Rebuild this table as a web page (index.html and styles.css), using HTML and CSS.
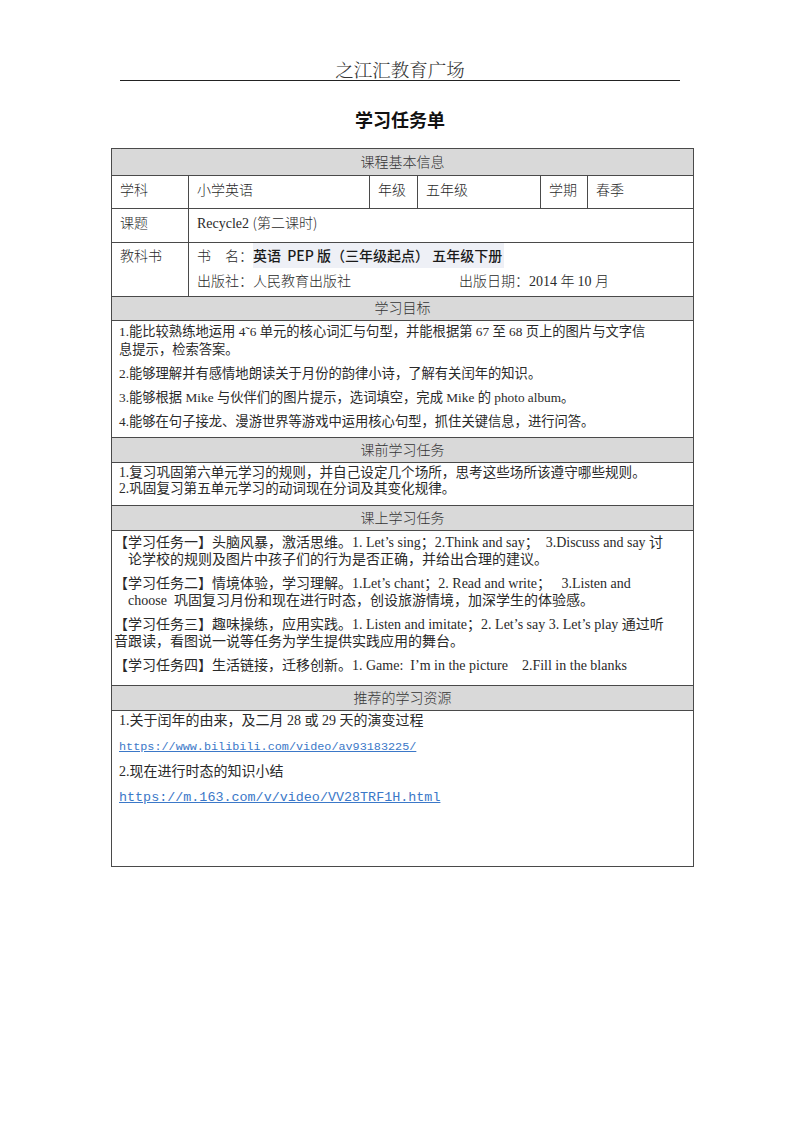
FILE: index.html
```html
<!DOCTYPE html>
<html lang="zh-CN">
<head>
<meta charset="utf-8">
<title>学习任务单</title>
<link rel="stylesheet" href="styles.css">
</head>
<body>
<div class="page">
  <div class="site-head">之江汇教育广场</div>
  <h1 class="title">学习任务单</h1>
  <table class="sheet">
    <colgroup>
      <col class="c1"><col class="c2"><col class="c3"><col class="c4"><col class="c5"><col class="c6">
    </colgroup>
    <tr class="head h26"><td colspan="6">课程基本信息</td></tr>
    <tr class="info r33">
      <td>学科</td><td>小学英语</td><td>年级</td><td>五年级</td><td>学期</td><td>春季</td>
    </tr>
    <tr class="info r34">
      <td>课题</td><td colspan="5"><span class="lat">Recycle2 </span>(第二课时)</td>
    </tr>
    <tr class="info book">
      <td>教科书</td>
      <td colspan="5">
        <div class="bline">书　名：<span class="hl">英语&nbsp; PEP 版（三年级起点） 五年级下册</span></div>
        <div class="bline pub"><span class="pubname">出版社：人民教育出版社</span><span>出版日期：<span class="lat">2014 </span>年 <span class="lat">10 </span>月</span></div>
      </td>
    </tr>
    <tr class="head"><td colspan="6">学习目标</td></tr>
    <tr class="body goals">
      <td colspan="6">
        <p>1.能比较熟练地运用 4˜6 单元的核心词汇与句型，并能根据第 67 至 68 页上的图片与文字信<br>息提示，检索答案。</p>
        <p>2.能够理解并有感情地朗读关于月份的韵律小诗，了解有关闰年的知识。</p>
        <p>3.能够根据 Mike 与伙伴们的图片提示，选词填空，完成 Mike 的 photo album。</p>
        <p>4.能够在句子接龙、漫游世界等游戏中运用核心句型，抓住关键信息，进行问答。</p>
      </td>
    </tr>
    <tr class="head h25"><td colspan="6">课前学习任务</td></tr>
    <tr class="body pre">
      <td colspan="6">
        <p>1.复习巩固第六单元学习的规则，并自己设定几个场所，思考这些场所该遵守哪些规则。</p>
        <p>2.巩固复习第五单元学习的动词现在分词及其变化规律。</p>
      </td>
    </tr>
    <tr class="head h25"><td colspan="6">课上学习任务</td></tr>
    <tr class="body tasks">
      <td colspan="6">
        <p>【学习任务一】头脑风暴，激活思维。<span class="lat">1. Let’s sing</span>；<span class="lat">2.Think and say</span>；　<span class="lat">3.Discuss and say </span>讨<br><span class="ind">论学校的规则及图片中孩子们的行为是否正确，并给出合理的建议。</span></p>
        <p>【学习任务二】情境体验，学习理解。<span class="lat">1.Let’s chant</span>；<span class="lat">2. Read and write</span>；　 <span class="lat">3.Listen and</span><br><span class="ind"><span class="lat">choose&nbsp; </span>巩固复习月份和现在进行时态，创设旅游情境，加深学生的体验感。</span></p>
        <p>【学习任务三】趣味操练，应用实践。<span class="lat">1. Listen and imitate</span>；<span class="lat">2. Let’s say 3. Let’s play </span>通过听<br>音跟读，看图说一说等任务为学生提供实践应用的舞台。</p>
        <p>【学习任务四】生活链接，迁移创新。<span class="lat">1. Game:&nbsp; I’m in the picture&nbsp;&nbsp;&nbsp; 2.Fill in the blanks</span></p>
      </td>
    </tr>
    <tr class="head h25"><td colspan="6">推荐的学习资源</td></tr>
    <tr class="body res">
      <td colspan="6">
        <p>1.关于闰年的由来，及二月 28 或 29 天的演变过程</p>
        <p><a class="link" href="#">https://www.bilibili.com/video/av93183225/</a></p>
        <p>2.现在进行时态的知识小结</p>
        <p><a class="link big" href="#">https://m.163.com/v/video/VV28TRF1H.html</a></p>
      </td>
    </tr>
  </table>
</div>
</body>
</html>
```

FILE: styles.css
```css
* { box-sizing: border-box; }

html, body {
  margin: 0;
  padding: 0;
  background: #ffffff;
}

body {
  width: 800px;
  height: 1132px;
  color: #222222;
  font-family: "Noto Serif CJK SC", "Liberation Serif", "Noto Sans CJK SC", serif;
}

.page {
  padding-top: 58px;
}

.site-head {
  width: 560px;
  margin: 0 0 0 120px;
  text-align: center;
  font-family: "Noto Serif CJK SC", "Noto Sans CJK SC", sans-serif;
  font-weight: 300;
  font-size: 18.5px;
  line-height: 22px;
  color: #333333;
  border-bottom: 1.5px solid #222222;
}

.title {
  margin: 26px 0 0 0;
  text-align: center;
  font-family: "Noto Sans CJK SC", sans-serif;
  font-weight: 700;
  font-size: 18px;
  line-height: 24px;
  color: #111111;
}

.sheet {
  margin: 17px 0 0 111px;
  width: 582px;
  border-collapse: collapse;
  table-layout: fixed;
  font-size: 14px;
}

.c1 { width: 77px; }
.c2 { width: 181px; }
.c3 { width: 48px; }
.c4 { width: 123px; }
.c5 { width: 47px; }
.c6 { width: 106px; }

.sheet td {
  border: 1px solid #4a4a4a;
  padding: 0 8px;
  font-family: "Liberation Serif", "Noto Serif CJK SC", "Noto Sans CJK SC", serif;
  font-weight: 400;
  color: #2a2a2a;
}

.sheet p { margin: 0; white-space: nowrap; }

.head td {
  background: #d9d9d9;
  text-align: center;
  height: 24px;
  padding: 0 0 3px 0;
  line-height: 20px;
  font-family: "Noto Sans CJK SC", sans-serif;
  font-weight: 300;
  color: #333333;
}
.head.h26 td { height: 27px; }
.head.h25 td { height: 25px; }

.info td {
  vertical-align: top;
  padding-top: 4px;
  line-height: 18px;
  font-family: "Noto Sans CJK SC", sans-serif;
  font-weight: 300;
}
.info.r33 td { height: 33px; }
.info.r34 td { height: 34px; }
.info.book td { height: 54px; padding-top: 0; line-height: 25px; }

.lat {
  font-family: "Liberation Serif", serif;
  font-weight: 400;
}

.hl {
  font-family: "Noto Sans CJK SC", sans-serif;
  font-weight: 500;
  background: #eef0f6;
  color: #1a1a1a;
  padding: 0 2px 0 0;
}

.bline { display: flex; }
.pubname { width: 262px; }

.body td {
  vertical-align: top;
  font-family: "Liberation Serif", "Noto Sans CJK SC", sans-serif;
}

.goals td {
  height: 117px;
  padding-top: 2px;
  padding-left: 7px;
  font-size: 13.3px;
  line-height: 18px;
}
.goals p + p { margin-top: 6px; }
.goals td, .pre td { font-weight: 400; }

.pre td {
  height: 43px;
  padding-top: 2px;
  padding-left: 7px;
  font-size: 13.6px;
  line-height: 16px;
}

.tasks td {
  height: 155px;
  padding: 3px 0 0 2px;
  font-size: 14px;
  line-height: 17px;
}
.tasks p + p { margin-top: 7px; }
.tasks .ind { padding-left: 14px; }

.res td {
  height: 156px;
  padding-top: 0;
  padding-left: 7px;
  font-size: 14px;
  line-height: 20px;
}
.res p + p { margin-top: 5px; }

.link {
  font-family: "Liberation Mono", monospace;
  font-size: 11.8px;
  color: #3b78c8;
  text-decoration: underline;
}
.link.big { font-size: 13.4px; }
```
